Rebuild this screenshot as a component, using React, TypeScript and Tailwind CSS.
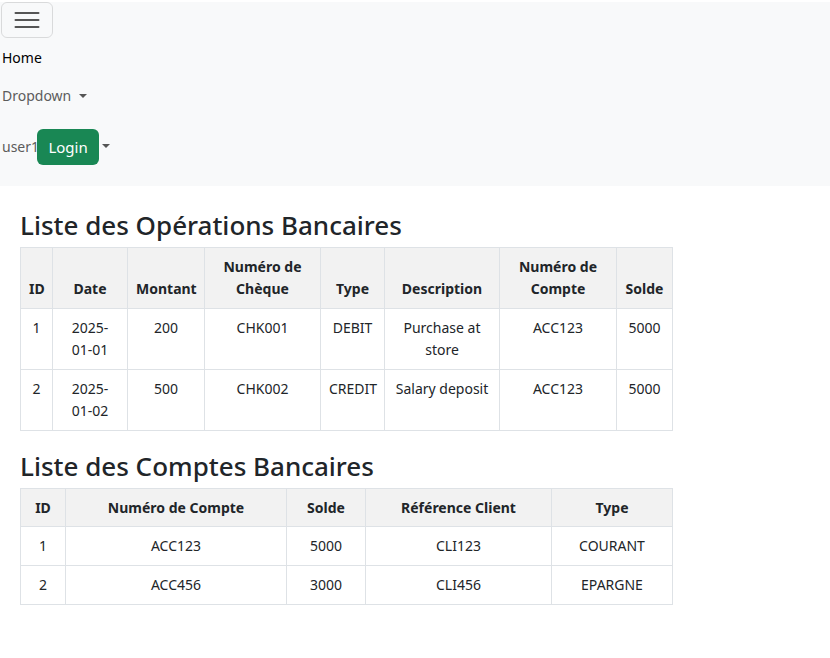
import React from "react";

const ops = [
  { id: "1", date: "2025-01-01", montant: "200", cheque: "CHK001", type: "DEBIT", desc: "Purchase at store", compte: "ACC123", solde: "5000" },
  { id: "2", date: "2025-01-02", montant: "500", cheque: "CHK002", type: "CREDIT", desc: "Salary deposit", compte: "ACC123", solde: "5000" },
];

const comptes = [
  { id: "1", numero: "ACC123", solde: "5000", ref: "CLI123", type: "COURANT" },
  { id: "2", numero: "ACC456", solde: "3000", ref: "CLI456", type: "EPARGNE" },
];

const th = "border border-[#dee2e6] bg-[#f2f2f2] px-2 py-2 align-bottom font-bold";
const td = "border border-[#dee2e6] px-2 py-2 align-top font-normal";

const App: React.FC = () => {
  return (
    <div
      className="min-h-screen bg-white text-[14px] leading-[22px] text-[#212529]"
      style={{ fontFamily: '"Noto Sans", "Open Sans", sans-serif' }}
    >
      <nav className="bg-[#f8f9fa] pb-[21px]">
        <div className="ml-px mt-[2px] flex h-[36px] w-[52px] items-center justify-center rounded-md border border-[rgba(0,0,0,0.12)]">
          <svg width="30" height="30" viewBox="0 0 30 30">
            <path d="M3.5 8h23M3.5 15h23M3.5 22h23" stroke="#555" strokeWidth="2" strokeLinecap="round" />
          </svg>
        </div>
        <div className="mt-px">
          <div className="py-2 pl-[2px] text-black">Home</div>
          <div className="py-2 pl-[2px] text-[#5c5c5c]">
            Dropdown
            <span className="ml-[8px] inline-block h-0 w-0 border-x-[4px] border-t-[4.5px] border-x-transparent border-t-[#555] align-[3px]" />
          </div>
          <div className="mt-[14px] flex items-center pl-[2px]">
            <span className="text-[#5c5c5c]">user1</span>
            <button className="ml-[-2px] flex h-[36px] w-[62px] items-center justify-center rounded-md bg-[#198754] text-[15px] text-white">
              Login
            </button>
            <span className="ml-[3px] mt-[-3px] inline-block h-0 w-0 border-x-[4px] border-t-[4.5px] border-x-transparent border-t-[#555]" />
          </div>
        </div>
      </nav>

      <div className="px-5">
        <h3 className="mt-[23px] mb-[6px] text-[26px] leading-[32px] font-medium">Liste des Opérations Bancaires</h3>
        <table className="w-[652px] table-fixed border-collapse text-center">
          <colgroup>
            <col className="w-[32px]" />
            <col className="w-[75px]" />
            <col className="w-[77px]" />
            <col className="w-[116px]" />
            <col className="w-[64px]" />
            <col className="w-[115px]" />
            <col className="w-[117px]" />
            <col className="w-[56px]" />
          </colgroup>
          <thead>
            <tr>
              <th className={th}>ID</th>
              <th className={th}>Date</th>
              <th className={th}>Montant</th>
              <th className={th}>Numéro de Chèque</th>
              <th className={th}>Type</th>
              <th className={th}>Description</th>
              <th className={th}>Numéro de Compte</th>
              <th className={th}>Solde</th>
            </tr>
          </thead>
          <tbody>
            {ops.map((o) => (
              <tr key={o.id}>
                <td className={td}>{o.id}</td>
                <td className={td}>
                  {o.date.slice(0, 5)}
                  <br />
                  {o.date.slice(5)}
                </td>
                <td className={td}>{o.montant}</td>
                <td className={td}>{o.cheque}</td>
                <td className={td}>{o.type}</td>
                <td className={td}>{o.desc}</td>
                <td className={td}>{o.compte}</td>
                <td className={td}>{o.solde}</td>
              </tr>
            ))}
          </tbody>
        </table>

        <h3 className="mt-[19px] mb-[6px] text-[26px] leading-[32px] font-medium">Liste des Comptes Bancaires</h3>
        <table className="w-[652px] table-fixed border-collapse text-center">
          <colgroup>
            <col className="w-[45px]" />
            <col className="w-[221px]" />
            <col className="w-[79px]" />
            <col className="w-[186px]" />
            <col className="w-[121px]" />
          </colgroup>
          <thead>
            <tr>
              <th className={`${th} leading-[21px]`}>ID</th>
              <th className={`${th} leading-[21px]`}>Numéro de Compte</th>
              <th className={`${th} leading-[21px]`}>Solde</th>
              <th className={`${th} leading-[21px]`}>Référence Client</th>
              <th className={`${th} leading-[21px]`}>Type</th>
            </tr>
          </thead>
          <tbody>
            {comptes.map((c) => (
              <tr key={c.id}>
                <td className={td}>{c.id}</td>
                <td className={td}>{c.numero}</td>
                <td className={td}>{c.solde}</td>
                <td className={td}>{c.ref}</td>
                <td className={td}>{c.type}</td>
              </tr>
            ))}
          </tbody>
        </table>
      </div>
    </div>
  );
};

export default App;
